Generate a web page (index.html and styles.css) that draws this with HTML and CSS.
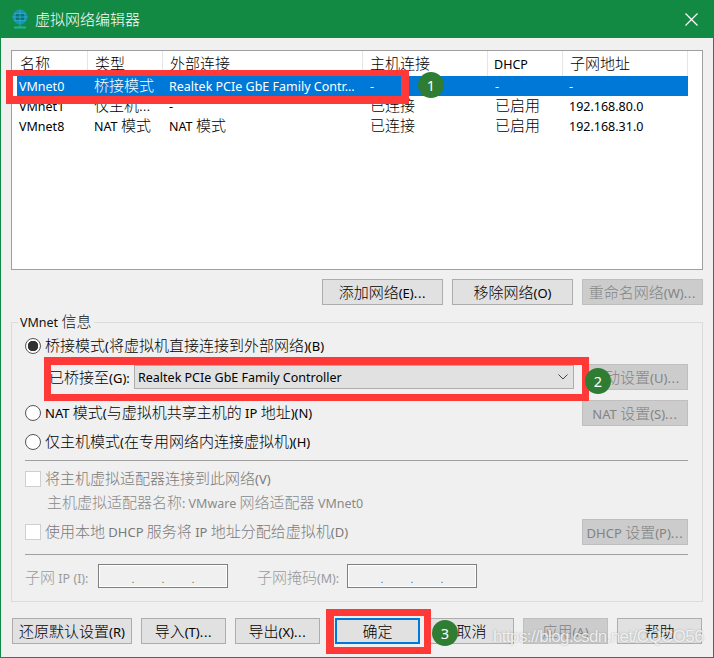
FILE: index.html
```html
<!DOCTYPE html>
<html lang="zh-CN">
<head>
<meta charset="utf-8">
<title>虚拟网络编辑器</title>
<link rel="stylesheet" href="styles.css">
</head>
<body>
<div class="window">
  <header class="titlebar">
    <svg class="app-icon" width="18" height="20" viewBox="0 0 18 20">
      <circle cx="9" cy="8" r="7.5" fill="#1a93b0"/>
      <path d="M5 4.500h8v7H5z" fill="#0f6f78"/>
      <path d="M1.500 8h15M9 .500v15M3 4.500h12M3 11.500h12" fill="none" stroke="#27a9c4" stroke-width="1"/>
      <path d="M9 15.500v2" stroke="#1a93b0" stroke-width="2" fill="none"/>
      <path d="M3 18.500h12" stroke="#1fb59b" stroke-width="2" fill="none"/>
    </svg>
    <span class="title-text">虚拟网络编辑器</span>
    <svg class="close-icon" width="13" height="13" viewBox="0 0 13 13">
      <path d="M.5.500l12 12M12.500.500l-12 12" stroke="#fff" stroke-width="1.200" fill="none"/>
    </svg>
  </header>

  <main class="content">
    <section class="list">
      <div class="list-head">
        <div class="hc hc-name">名称</div>
        <div class="hc hc-type">类型</div>
        <div class="hc hc-ext">外部连接</div>
        <div class="hc hc-host">主机连接</div>
        <div class="hc hc-dhcp"><span class="en">DHCP</span></div>
        <div class="hc hc-sub">子网地址</div>
      </div>
      <div class="list-row selected">
        <div class="c c-name"><span class="en">VMnet0</span></div>
        <div class="c c-type">桥接模式</div>
        <div class="c c-ext"><span class="en">Realtek PCIe GbE Family Contr...</span></div>
        <div class="c c-host"><span class="en">-</span></div>
        <div class="c c-dhcp"><span class="en">-</span></div>
        <div class="c c-sub"><span class="en">-</span></div>
      </div>
      <div class="list-row">
        <div class="c c-name"><span class="en">VMnet1</span></div>
        <div class="c c-type">仅主机...</div>
        <div class="c c-ext"><span class="en">-</span></div>
        <div class="c c-host">已连接</div>
        <div class="c c-dhcp">已启用</div>
        <div class="c c-sub"><span class="en">192.168.80.0</span></div>
      </div>
      <div class="list-row">
        <div class="c c-name"><span class="en">VMnet8</span></div>
        <div class="c c-type"><span class="en">NAT</span> 模式</div>
        <div class="c c-ext"><span class="en">NAT</span> 模式</div>
        <div class="c c-host">已连接</div>
        <div class="c c-dhcp">已启用</div>
        <div class="c c-sub"><span class="en">192.168.31.0</span></div>
      </div>
    </section>

    <div class="list-actions">
      <button class="btn w120">添加网络<span class="en">(E)<span class="dots">...</span></span></button>
      <button class="btn w120">移除网络<span class="en">(O)</span></button>
      <button class="btn w120 off">重命名网络<span class="en">(W)<span class="dots">...</span></span></button>
    </div>

    <fieldset class="group">
      <legend class="group-title"><span class="en">VMnet</span> 信息</legend>

      <div class="row r-bridge">
        <span class="radio on"></span>
        <span class="opt">桥接模式<span class="en">(</span>将虚拟机直接连接到外部网络<span class="en">)(B)</span></span>
      </div>

      <div class="row r-combo">
        <span class="combo-label">已桥接至<span class="en">(G):</span></span>
        <div class="combo">
          <span class="en combo-val">Realtek PCIe GbE Family Controller</span>
          <svg width="10" height="6" viewBox="0 0 10 6"><path d="M.5.500L5 5 9.500.500" fill="none" stroke="#444" stroke-width="1"/></svg>
        </div>
        <button class="btn side off">自动设置<span class="en">(U)<span class="dots">...</span></span></button>
      </div>

      <div class="row r-nat">
        <span class="radio"></span>
        <span class="opt"><span class="en">NAT</span> 模式<span class="en">(</span>与虚拟机共享主机的 <span class="en">IP</span> 地址<span class="en">)(N)</span></span>
        <button class="btn side off push"><span class="en">NAT</span> 设置<span class="en">(S)<span class="dots">...</span></span></button>
      </div>

      <div class="row r-host">
        <span class="radio"></span>
        <span class="opt">仅主机模式<span class="en">(</span>在专用网络内连接虚拟机<span class="en">)(H)</span></span>
      </div>

      <hr class="sep sep-a">

      <div class="row r-check1 muted">
        <span class="check"></span>
        <span class="opt">将主机虚拟适配器连接到此网络<span class="en">(V)</span></span>
      </div>
      <div class="adapter muted">主机虚拟适配器名称<span class="en">: VMware</span> 网络适配器 <span class="en">VMnet0</span></div>

      <div class="row r-check2 muted">
        <span class="check"></span>
        <span class="opt">使用本地 <span class="en">DHCP</span> 服务将 <span class="en">IP</span> 地址分配给虚拟机<span class="en">(D)</span></span>
        <button class="btn side off push"><span class="en">DHCP</span> 设置<span class="en">(P)<span class="dots">...</span></span></button>
      </div>

      <hr class="sep sep-b">

      <div class="row r-ip muted">
        <span class="ip-label">子网 <span class="en">IP (I):</span></span>
        <div class="ip-box"><i>.</i><i>.</i><i>.</i></div>
        <span class="ip-label mask-label">子网掩码<span class="en">(M):</span></span>
        <div class="ip-box"><i>.</i><i>.</i><i>.</i></div>
      </div>
    </fieldset>

    <footer class="footer">
      <button class="btn restore">还原默认设置<span class="en">(R)</span></button>
      <button class="btn w85">导入<span class="en">(T)<span class="dots">...</span></span></button>
      <button class="btn w85">导出<span class="en">(X)<span class="dots">...</span></span></button>
      <button class="btn w85 default">确定</button>
      <button class="btn w85">取消</button>
      <button class="btn w85 off">应用<span class="en">(A)</span></button>
      <button class="btn w85">帮助</button>
    </footer>
  </main>

  <div class="mark mark-1"></div>
  <div class="mark mark-2"></div>
  <div class="mark mark-3"></div>
  <div class="badge badge-1">1</div>
  <div class="badge badge-2">2</div>
  <div class="badge badge-3">3</div>
  <div class="watermark">https://blog.csdn.net/CQCO56</div>
</div>
</body>
</html>
```

FILE: styles.css
```css
* { box-sizing: border-box; }
html, body { margin: 0; padding: 0; }
body {
  width: 714px;
  height: 658px;
  overflow: hidden;
  font-family: "Noto Sans CJK SC", "Noto Sans", sans-serif;
  font-size: 15px;
  font-weight: 300;
  color: #000;
}
.en {
  font-family: "Noto Sans", "Noto Sans CJK SC", sans-serif;
  font-size: 12.5px;
  font-weight: 400;
}
.opt .en, .btn .en, .combo-label .en { font-size: 13px; }
.dots { letter-spacing: .7px; }

.window {
  position: relative;
  width: 714px;
  height: 658px;
  background: #f0f0f0;
  border: 1px solid #138a43;
  border-top: 0;
  display: flex;
  flex-direction: column;
}

.titlebar {
  height: 38px;
  flex: none;
  margin: 0 -1px;
  background: #138a43;
  color: #fff;
  display: flex;
  align-items: center;
  padding: 0 16px 0 11px;
}
.app-icon { flex: none; margin-right: 6px; }
.title-text { font-size: 15px; line-height: 20px; }
.close-icon { margin-left: auto; }

.content {
  flex: 1;
  padding: 12px 10px 0;
  display: flex;
  flex-direction: column;
}

.list {
  height: 220px;
  background: #fff;
  border: 1px solid #9f9f9f;
  flex: none;
}
.list-head { display: flex; height: 25px; }
.hc {
  border-right: 1px solid #e5e5e5;
  line-height: 23px;
  padding-left: 7px;
  white-space: nowrap;
}
.hc-name { width: 76px; padding-left: 8px; }
.hc-type { width: 75px; }
.hc-ext { width: 200px; }
.hc-host { width: 125px; }
.hc-dhcp { width: 75px; padding-left: 6px; }
.hc-sub { width: 125px; }

.list-row {
  display: flex;
  height: 20px;
  margin-left: 5px;
  width: 671px;
  line-height: 18px;
}
.list-row.selected { background: #0078d7; color: #fff; }
.c { padding-left: 7px; white-space: nowrap; }
.c-name { width: 71px; padding-left: 2px; }
.c-type { width: 75px; padding-left: 6px; }
.c-ext { width: 200px; padding-left: 6px; }
.c-host { width: 125px; }
.c-dhcp { width: 75px; }
.c-sub { width: 125px; padding-left: 6px; }

.btn {
  height: 26px;
  padding: 0;
  font: inherit;
  color: #000;
  background: #e1e1e1;
  border: 1px solid #adadad;
  white-space: nowrap;
  line-height: 22px;
}
.btn.off {
  background: #cccccc;
  border-color: #bfbfbf;
  color: #838383;
}
.w120 { width: 121px; }
.w85 { width: 85px; }

.list-actions {
  display: flex;
  justify-content: flex-end;
  gap: 9px;
  margin-top: 9px;
  flex: none;
}

.group {
  margin: 9px 0 0;
  padding: 0 14px 0 13px;
  height: 288px;
  border: 1px solid #dcdcdc;
  min-width: 0;
  flex: none;
}
.group-title {
  padding: 0 3px 0 2px;
  margin-left: -7px;
  line-height: 14px;
  color: #111;
}

.row { display: flex; align-items: center; }
.opt { white-space: nowrap; line-height: 18px; margin-top: -2px; }
.push { margin-left: auto; }
.radio {
  width: 16px;
  height: 16px;
  flex: none;
  border-radius: 50%;
  background: #fff;
  border: 1px solid #555;
  margin: 0 4px 0 0;
  position: relative;
}
.radio.on {
  background: radial-gradient(circle, #333 0 5px, #fff 5.500px);
}
.check {
  width: 16px;
  height: 16px;
  flex: none;
  background: #fff;
  border: 1px solid #cfcfcf;
  margin-right: 4px;
}
.muted { color: #7a7a7a; }
.muted .btn.off { color: #838383; }

.r-bridge { height: 20px; margin-top: 6px; }
.r-combo { height: 26px; margin-top: 8px; padding-left: 24px; }
.combo-label { white-space: nowrap; width: 85px; flex: none; line-height: 20px; }
.combo {
  width: 440px;
  height: 24px;
  flex: none;
  background: #e1e1e1;
  border: 1px solid #adadad;
  display: flex;
  align-items: center;
  justify-content: space-between;
  padding: 0 5px 0 3px;
}
.combo-val { white-space: nowrap; }
.side { width: 106px; flex: none; }
.r-combo .side { margin-left: 8px; }
.r-nat { height: 26px; margin-top: 10px; }
.r-host { height: 20px; margin-top: 6px; }
.sep { border: 0; border-top: 1px solid #a0a0a0; margin: 0; height: 0; }
.sep-a { margin-top: 8px; }
.r-check1 { height: 20px; margin-top: 8px; }
.adapter { padding-left: 22px; height: 20px; line-height: 20px; margin-top: 3px; color: #8a8a8a; white-space: nowrap; }
.r-check2 { height: 26px; margin-top: 7px; }
.sep-b { margin-top: 9px; }
.r-ip { height: 24px; margin-top: 9px; }
.ip-label { width: 73px; flex: none; white-space: nowrap; color: #9a9a9a; }
.mask-label { width: 90px; margin-left: 29px; }
.ip-box {
  width: 130px;
  height: 24px;
  flex: none;
  background: #f0f0f0;
  border: 1px solid #7f7f7f;
  box-shadow: inset 0 0 0 1px #fff;
  display: flex;
  justify-content: center;
  gap: 27px;
  line-height: 26px;
  color: #444;
  font-size: 12px;
}
.ip-box i { font-style: normal; }

.footer {
  display: flex;
  gap: 9px;
  margin-top: 16px;
  margin-left: 1px;
  flex: none;
}
.restore { width: 120px; }
.default {
  border: 2px solid #0078d7;
  margin-left: 6px;
}

.mark {
  position: absolute;
  border-style: solid;
  border-color: #ff3838;
  background: transparent;
}
.mark-1 { left: 5px; top: 70px; width: 403px; height: 34px; border-width: 6px 8px 8px 7px; }
.mark-2 { left: 43px; top: 357px; width: 545px; height: 44px; border-width: 8px 7px 7px 7px; }
.mark-3 { left: 325px; top: 609px; width: 105px; height: 45px; border-width: 7px 7px 7px 8px; }

.badge {
  position: absolute;
  width: 26px;
  height: 26px;
  border-radius: 50%;
  background: #2e7d32;
  color: #fff;
  font-family: "Noto Sans", sans-serif;
  font-size: 14.5px;
  font-weight: 400;
  line-height: 26px;
  text-align: center;
}
.badge-1 { left: 417px; top: 72px; }
.badge-2 { left: 584px; top: 368px; }
.badge-3 { left: 431px; top: 620px; }

.watermark {
  position: absolute;
  left: 492px;
  top: 625px;
  width: 212px;
  font-family: "Liberation Sans", sans-serif;
  font-size: 17px;
  font-weight: 400;
  letter-spacing: -.6px;
  line-height: 24px;
  color: rgba(255, 255, 255, .8);
  text-shadow: 0 0 2px rgba(110, 110, 110, .55);
  white-space: nowrap;
}
```
